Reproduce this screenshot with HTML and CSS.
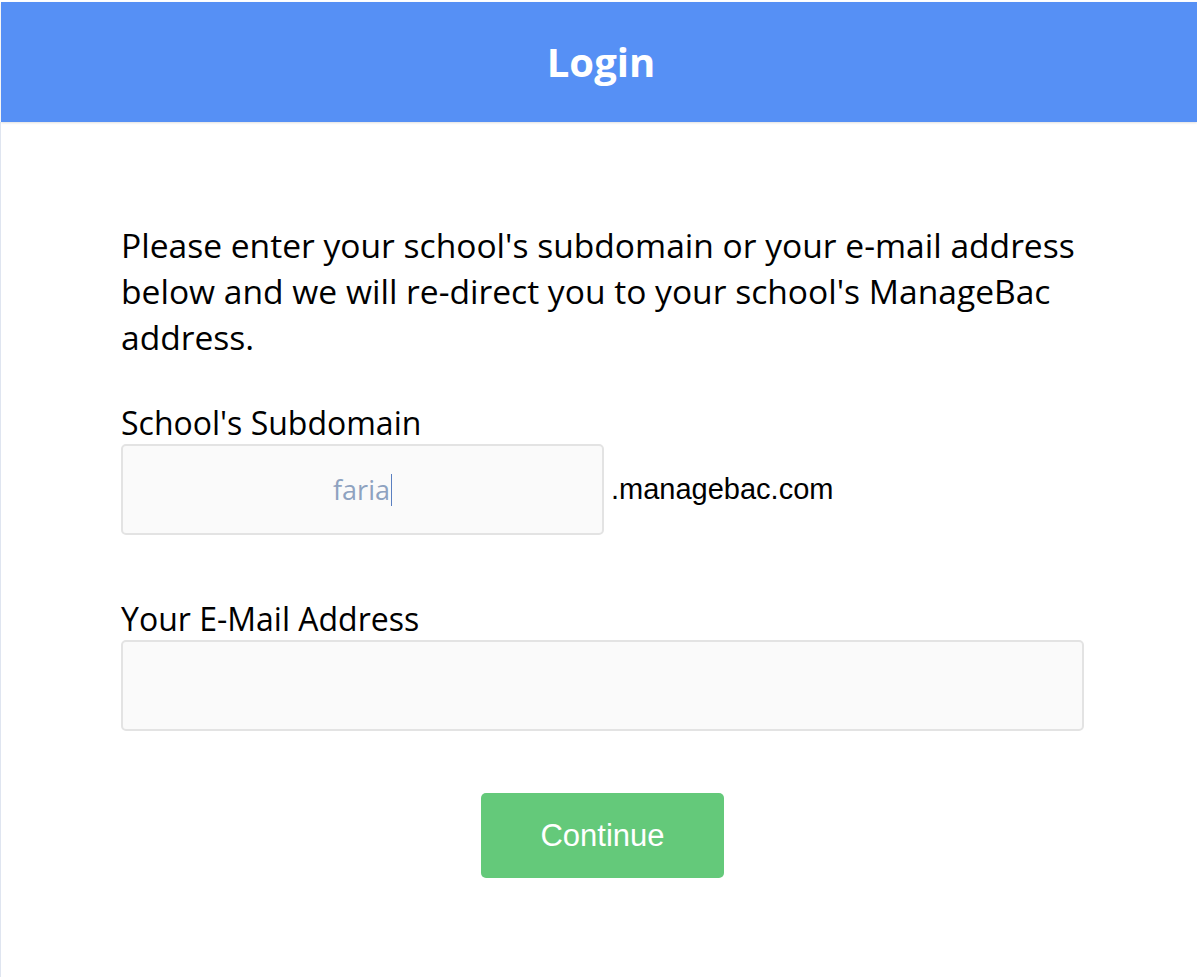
FILE: index.html
```html
<!DOCTYPE html>
<html>
<head>
<meta charset="utf-8">
<title>Login</title>
<link rel="stylesheet" href="styles.css">
</head>
<body>
<div class="page">
  <header class="header">
    <h1 class="title">Login</h1>
  </header>
  <main class="content">
    <p class="intro">Please enter your school's subdomain or your e-mail address below and we will re-direct you to your school's ManageBac address.</p>
    <div class="field">
      <label class="label">School's Subdomain</label>
      <div class="row">
        <div class="input input-sub"><span class="typed">faria</span><span class="caret"></span></div>
        <span class="suffix">.managebac.com</span>
      </div>
    </div>
    <div class="field field-email">
      <label class="label">Your E-Mail Address</label>
      <div class="input input-email"></div>
    </div>
    <div class="actions">
      <button class="btn">Continue</button>
    </div>
  </main>
</div>
</body>
</html>
```

FILE: styles.css
```css
html, body {
  margin: 0;
  padding: 0;
  background: #ffffff;
}
body {
  font-family: "Open Sans", "Liberation Sans", sans-serif;
  color: #000;
}
.page {
  box-sizing: border-box;
  height: 977px;
  padding-top: 2px;
  display: flex;
  flex-direction: column;
  overflow: hidden;
}
.header {
  flex: none;
  margin-left: 1px;
  height: 120px;
  background: #5690f5;
  display: flex;
  align-items: center;
  justify-content: center;
  box-shadow: 0 1px 2px rgba(0, 0, 0, 0.12);
  position: relative;
  z-index: 1;
}
.title {
  margin: 0;
  padding-left: 4px;
  color: #ffffff;
  font-family: "Open Sans", sans-serif;
  font-weight: 700;
  font-size: 40px;
  line-height: 1;
}
.content {
  flex: 1;
  border-left: 1px solid #dfe5f0;
  padding: 100px 0 0 120px;
}
.intro {
  width: 963px;
  margin: 0 0 41px;
  font-size: 33.6px;
  line-height: 46px;
}
.label {
  display: block;
  font-size: 32px;
  line-height: 43px;
}
.row {
  display: flex;
  align-items: center;
  gap: 7px;
}
.input {
  box-sizing: border-box;
  height: 91px;
  border: 2px solid #e3e3e3;
  border-radius: 5px;
  background: #fafafa;
}
.input-sub {
  width: 483px;
  display: flex;
  align-items: center;
  justify-content: center;
  font-size: 27px;
  color: #8ea2c0;
}
.typed {
  line-height: 32px;
}
.caret {
  display: inline-block;
  width: 1px;
  height: 32px;
  background: #5a7fc0;
  margin-left: 1px;
}
.suffix {
  font-family: "Liberation Sans", Arial, sans-serif;
  font-size: 29px;
  color: #000;
}
.field-email {
  margin-top: 62px;
}
.input-email {
  width: 963px;
}
.actions {
  width: 963px;
  display: flex;
  justify-content: center;
  margin-top: 62px;
}
.btn {
  width: 243px;
  height: 85px;
  border: none;
  border-radius: 5px;
  background: #64c97a;
  color: #ffffff;
  font-family: "Liberation Sans", Arial, sans-serif;
  font-size: 31px;
  padding: 0;
  cursor: pointer;
}
```
